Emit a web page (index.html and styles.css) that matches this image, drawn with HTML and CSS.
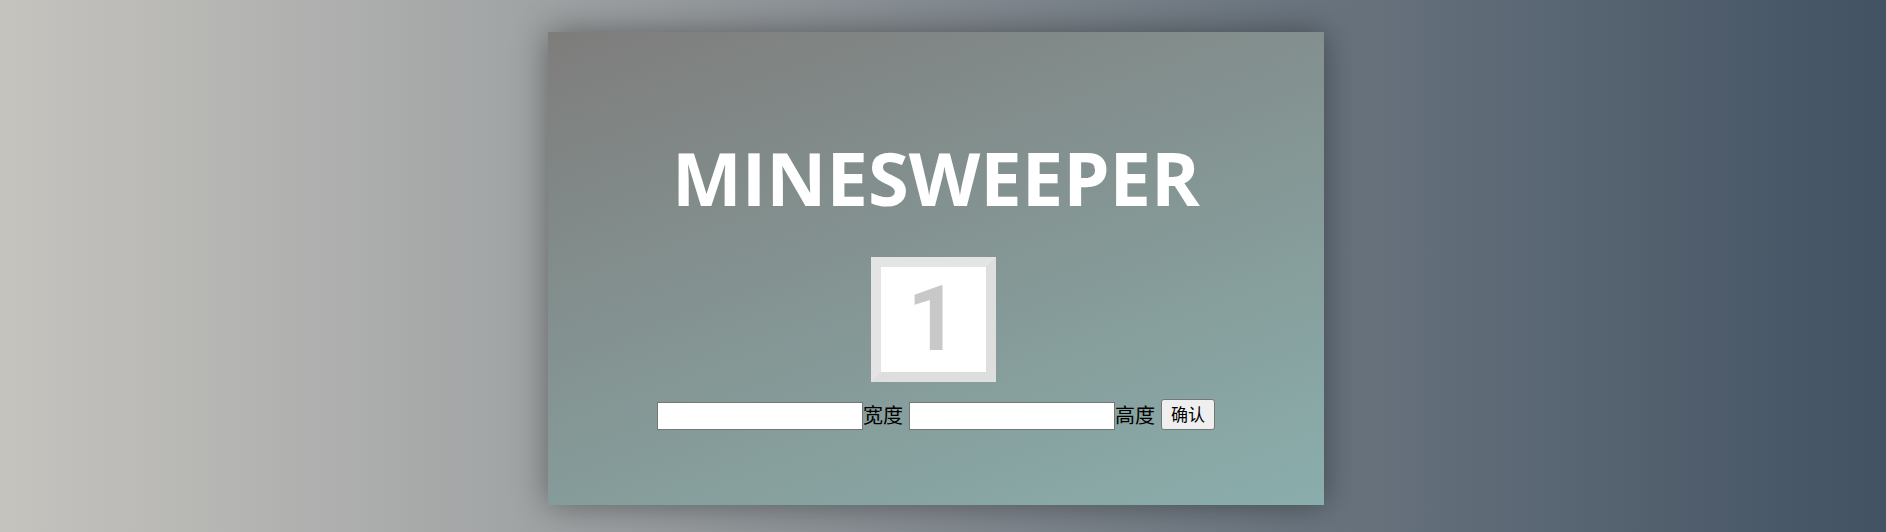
FILE: index.html
```html
<!DOCTYPE html>
<html lang="zh-CN">
<head>
  <meta charset="utf-8">
  <title>Minesweeper</title>
  <link rel="stylesheet" href="styles.css">
</head>
<body>
  <main class="card">
    <h1 class="title">MINESWEEPER</h1>
    <div class="tile">1</div>
    <form class="settings">
      <div class="field">
        <input class="field-input" id="board-width" type="text">
        <label for="board-width">宽度</label>
      </div>
      <div class="field">
        <input class="field-input" id="board-height" type="text">
        <label for="board-height">高度</label>
      </div>
      <button class="confirm" type="button">确认</button>
    </form>
  </main>
</body>
</html>
```
FILE: styles.css
```css
* {
  box-sizing: border-box;
}

body {
  margin: 0;
  min-height: 100vh;
  display: flex;
  justify-content: center;
  align-items: flex-start;
  padding: 32px 14px 27px 0;
  font-family: "Open Sans", "Noto Sans CJK SC", sans-serif;
  background: linear-gradient(90deg, #c5c3be, #425263);
}

.card {
  display: flex;
  flex-direction: column;
  align-items: center;
  padding: 96px 109px 75px;
  background: linear-gradient(160deg, #7e7d7c, #8aaeac);
  box-shadow: 0 0 32px rgba(0, 0, 0, 0.4);
}

.title {
  margin: 0;
  font-size: 74px;
  line-height: 100px;
  font-weight: 700;
  color: #fff;
}

.tile {
  width: 125px;
  height: 125px;
  margin: 29px 6px 17px 0;
  border: 10px solid;
  border-color: #e4e4e4 #dedede #dedede #e4e4e4;
  background: #fff;
  color: #c8c8c8;
  font-family: Roboto, sans-serif;
  font-size: 90px;
  font-weight: 700;
  line-height: 105px;
  text-align: center;
}

.settings {
  display: flex;
  align-items: flex-end;
  gap: 6px;
  font-size: 20px;
}

.field {
  display: flex;
  align-items: center;
  line-height: 28px;
}

.field-input {
  width: 206px;
  height: 28px;
  padding: 1px 2px;
  border: 1px solid #767676;
  border-radius: 0;
  background: #fff;
  font-size: 17px;
}

.confirm {
  height: 31px;
  padding: 0 9px;
  border: 1px solid #767676;
  border-radius: 3px;
  background: #efefef;
  color: #000;
  font-family: inherit;
  font-size: 17px;
  line-height: 28px;
}
```
